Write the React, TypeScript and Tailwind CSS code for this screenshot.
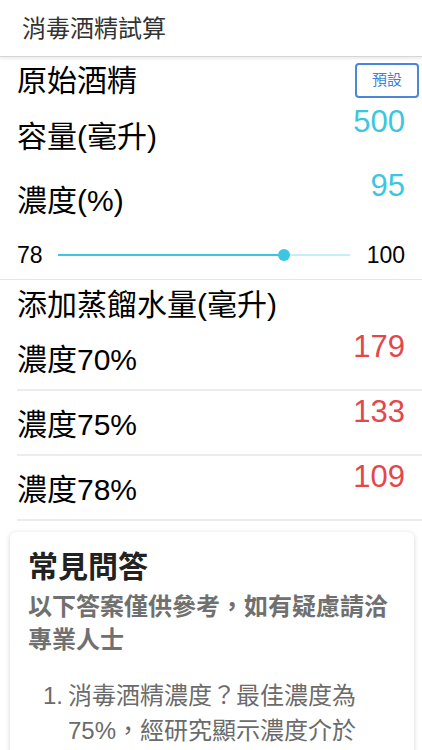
import React from 'react';

const font = { fontFamily: '"Liberation Sans", "Noto Sans CJK TC", sans-serif' };

const results = [
  { label: '濃度70%', value: 179 },
  { label: '濃度75%', value: 133 },
  { label: '濃度78%', value: 109 },
];

export default function App() {
  const pct = (95 - 78) / (100 - 78);

  return (
    <div className="w-[422px] h-[750px] overflow-hidden bg-white text-black" style={font}>
      <header className="h-[57px] flex items-center px-[22px] pt-[2px] border-b border-[#d6d6d6] shadow-[0_2px_3px_rgba(0,0,0,0.08)] relative z-10">
        <h1 className="text-[24px] text-[#333]">消毒酒精試算</h1>
      </header>

      <div className="flex items-start justify-between h-[46px] pl-[17px] pr-[3px]">
        <h2 className="text-[30px] leading-[48px]">原始酒精</h2>
        <button className="mt-[6px] w-[64px] h-[35px] rounded-[4px] border-2 border-[#4a86de] text-[#3f7fd9] text-[15px]">
          預設
        </button>
      </div>

      <div className="flex justify-between h-[64px] pl-[17px] pr-[17px]">
        <span className="text-[30px] leading-[34px] pt-[17px]">容量(毫升)</span>
        <span className="text-[31px] leading-[34px] pt-[2px] text-[#3cc6e2]">500</span>
      </div>
      <div className="flex justify-between h-[64px] pl-[17px] pr-[17px]">
        <span className="text-[30px] leading-[34px] pt-[17px]">濃度(%)</span>
        <span className="text-[31px] leading-[34px] pt-[2px] text-[#3cc6e2]">95</span>
      </div>

      <div className="flex items-center h-[49px] pl-[17px] pr-[17px] border-b border-[#e6e6e6]">
        <span className="text-[23px] w-[41px]">78</span>
        <div className="relative flex-1 h-[12px] flex items-center">
          <div className="w-full h-[2px] bg-[#c6eef7]" />
          <div className="absolute left-0 h-[2px] bg-[#3cc6e2]" style={{ width: `${pct * 100}%` }} />
          <div
            className="absolute w-[12px] h-[12px] rounded-full bg-[#3cc6e2] -translate-x-1/2"
            style={{ left: `${pct * 100}%` }}
          />
        </div>
        <span className="text-[23px] w-[55px] text-right">100</span>
      </div>

      <div className="h-[46px] pl-[17px]">
        <h2 className="text-[30px] leading-[50px]">添加蒸餾水量(毫升)</h2>
      </div>

      <ul className="pl-[17px]">
        {results.map(r => (
          <li key={r.label} className="flex justify-between h-[65px] pr-[17px] border-b-2 border-[#ececec]">
            <span className="text-[30px] leading-[34px] pt-[17px]">{r.label}</span>
            <span className="text-[31px] leading-[34px] pt-[4px] text-[#e4474a]">{r.value}</span>
          </li>
        ))}
      </ul>

      <section className="mx-[10px] mt-[11px] w-[404px] rounded-[6px] bg-white shadow-[0_1px_5px_rgba(0,0,0,0.18)] px-[18px] pt-[16px] pb-6">
        <h3 className="text-[30px] leading-[38px] font-bold text-[#222]">常見問答</h3>
        <p className="mt-[4px] text-[24px] leading-[33px] font-semibold text-[#707070]">
          以下答案僅供參考，如有疑慮請洽專業人士
        </p>
        <ol className="mt-[22px] text-[24px] leading-[35px] text-[#6b6b6b] pl-[15px]">
          <li className="flex">
            <span className="w-[25px] shrink-0">1.</span>
            <span>消毒酒精濃度？最佳濃度為75%，經研究顯示濃度介於</span>
          </li>
        </ol>
      </section>
    </div>
  );
}
